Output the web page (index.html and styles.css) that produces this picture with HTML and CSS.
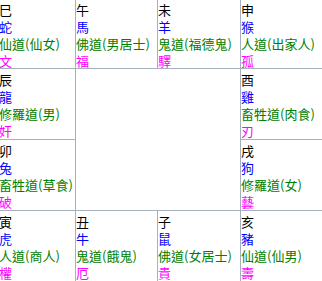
FILE: index.html
```html
<!DOCTYPE html>
<html lang="zh-Hant">
<head>
<meta charset="utf-8">
<title>十二宮</title>
<link rel="stylesheet" href="styles.css">
</head>
<body>
<div class="board">
  <div class="cell top"><span class="br">巳</span><span class="an">蛇</span><span class="realm">仙道(仙女)</span><span class="star">文</span></div>
  <div class="cell top"><span class="br">午</span><span class="an">馬</span><span class="realm">佛道(男居士)</span><span class="star">福</span></div>
  <div class="cell top"><span class="br">未</span><span class="an">羊</span><span class="realm">鬼道(福德鬼)</span><span class="star">驛</span></div>
  <div class="cell top"><span class="br">申</span><span class="an">猴</span><span class="realm">人道(出家人)</span><span class="star">孤</span></div>

  <div class="cell"><span class="br">辰</span><span class="an">龍</span><span class="realm">修羅道(男)</span><span class="star">奸</span></div>
  <div class="cell center"></div>
  <div class="cell"><span class="br">酉</span><span class="an">雞</span><span class="realm">畜牲道(肉食)</span><span class="star">刃</span></div>

  <div class="cell"><span class="br">卯</span><span class="an">兔</span><span class="realm">畜牲道(草食)</span><span class="star">破</span></div>
  <div class="cell"><span class="br">戌</span><span class="an">狗</span><span class="realm">修羅道(女)</span><span class="star">藝</span></div>

  <div class="cell"><span class="br">寅</span><span class="an">虎</span><span class="realm">人道(商人)</span><span class="star">權</span></div>
  <div class="cell"><span class="br">丑</span><span class="an">牛</span><span class="realm">鬼道(餓鬼)</span><span class="star">厄</span></div>
  <div class="cell"><span class="br">子</span><span class="an">鼠</span><span class="realm">佛道(女居士)</span><span class="star">貴</span></div>
  <div class="cell"><span class="br">亥</span><span class="an">豬</span><span class="realm">仙道(仙男)</span><span class="star">壽</span></div>
</div>
</body>
</html>
```
FILE: styles.css
```css
html, body {
  margin: 0;
  background: #ffffff;
}

.board {
  display: grid;
  grid-template-columns: 76px 81px 82px 82px;
  grid-template-rows: 68px 70px 70px 70px;
  gap: 1px;
  width: max-content;
  margin: 0 0 0 -1px;
  background: #a7b1bd;
  font-family: "Noto Sans CJK TC", "Noto Sans CJK SC", sans-serif;
  font-size: 13px;
  line-height: 17px;
}

.cell {
  display: flex;
  flex-direction: column;
  padding: 2px 0 0;
  background: #ffffff;
  white-space: nowrap;
}

.cell.top {
  padding-top: 0;
}

.cell.top .br {
  padding-top: 1px;
}

.center {
  grid-column: 2 / 4;
  grid-row: 2 / 4;
}

.br { color: #000000; }
.an { color: #0000ff; }
.realm { color: #008000; }
.star { color: #ff00ff; }
```
